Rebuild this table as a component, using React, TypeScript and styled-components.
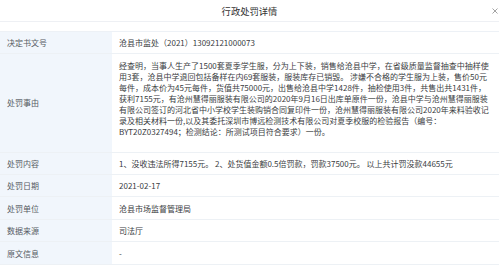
import styled, { createGlobalStyle } from "styled-components";

const GlobalStyle = createGlobalStyle`
  html, body {
    margin: 0;
    padding: 0;
    background: #ffffff;
  }
  body {
    font-family: "Noto Sans CJK SC", "Liberation Sans", sans-serif;
    -webkit-font-smoothing: antialiased;
  }
`;

const Dialog = styled.div`
  width: 499px;
  height: 267px;
  overflow: hidden;
  background: #ffffff;
`;

const Header = styled.div`
  display: grid;
  grid-template-columns: 1fr auto 1fr;
  align-items: center;
  height: 21px;
  border-bottom: 1px solid #eef0f4;
`;

const Title = styled.div`
  grid-column: 2;
  font-size: 9.3px;
  line-height: 12px;
  color: #333333;
`;

const Close = styled.button`
  grid-column: 3;
  justify-self: end;
  display: flex;
  align-items: center;
  width: 7px;
  height: 21px;
  padding: 0;
  border: 0;
  background: none;
  color: #8c8c8c;
`;

const Table = styled.div`
  margin-top: 9px;
  border-top: 1px solid #edf1f6;
`;

const Row = styled.div`
  display: grid;
  grid-template-columns: 112px 1fr;
  border-bottom: 1px solid #edf1f5;
  font-size: 8px;
`;

const Label = styled.div`
  display: flex;
  align-items: center;
  padding: 5.2px 7px;
  background: #f1f6fc;
  color: #555a62;
`;

const Value = styled.div<{ $extra?: number }>`
  padding: 5.2px 7px ${(p) => 5.2 + (p.$extra ?? 0)}px 7px;
  color: #3a3d42;
`;

const Line = styled.span`
  display: block;
  height: 11.1px;
  line-height: 11.1px;
  white-space: nowrap;
`;

const reasonLines = [
  "经查明，当事人生产了1500套夏季学生服，分为上下装，销售给沧县中学，在省级质量监督抽查中抽样使",
  "用3套，沧县中学退回包括备样在内69套服装，服装库存已销毁。 涉嫌不合格的学生服为上装，售价50元",
  "每件，成本价为45元每件，货值共75000元，出售给沧县中学1428件，抽检使用3件，共售出共1431件，",
  "获利7155元，有沧州慧得丽服装有限公司的2020年9月16日出库单原件一份，沧县中学与沧州慧得丽服装",
  "有限公司签订的河北省中小学校学生装购销合同复印件一份，沧州慧得丽服装有限公司2020年来料验收记",
  "录及相关材料一份,以及其委托深圳市博远检测技术有限公司对夏季校服的检验报告（编号：",
  "BYT20Z0327494；检测结论：所测试项目符合要求）一份。",
];

const rows: { label: string; value: string }[] = [
  { label: "处罚内容", value: "1、没收违法所得7155元。 2、处货值金额0.5倍罚款，罚款37500元。 以上共计罚没款44655元" },
  { label: "处罚日期", value: "2021-02-17" },
  { label: "处罚单位", value: "沧县市场监督管理局" },
  { label: "数据来源", value: "司法厅" },
  { label: "原文信息", value: "-" },
];

export default function App() {
  return (
    <>
      <GlobalStyle />
      <Dialog>
        <Header>
          <Title>行政处罚详情</Title>
          <Close aria-label="close">
            <svg width="6" height="6" viewBox="0 0 6 6">
              <path d="M0.5 0.5 L5.5 5.5 M5.5 0.5 L0.5 5.5" stroke="currentColor" strokeWidth="0.8" />
            </svg>
          </Close>
        </Header>
        <Table>
          <Row>
            <Label>
              <Line>决定书文号</Line>
            </Label>
            <Value>
              <Line>沧县市监处（2021）13092121000073</Line>
            </Value>
          </Row>
          <Row>
            <Label>
              <Line>处罚事由</Line>
            </Label>
            <Value $extra={9}>
              {reasonLines.map((l) => (
                <Line key={l}>{l}</Line>
              ))}
            </Value>
          </Row>
          {rows.map((r) => (
            <Row key={r.label}>
              <Label>
                <Line>{r.label}</Line>
              </Label>
              <Value>
                <Line>{r.value}</Line>
              </Value>
            </Row>
          ))}
        </Table>
      </Dialog>
    </>
  );
}
